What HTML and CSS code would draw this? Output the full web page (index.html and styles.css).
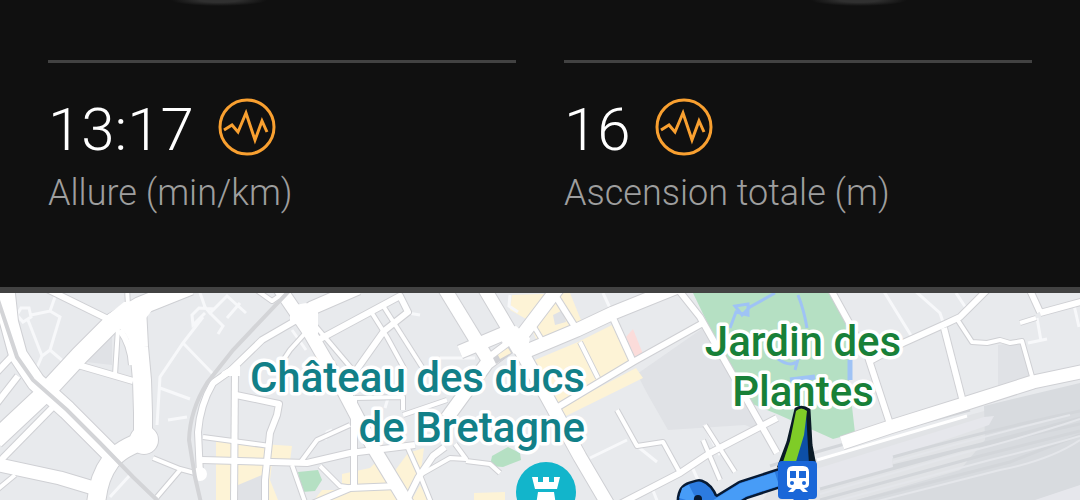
FILE: index.html
```html
<!DOCTYPE html>
<html lang="fr">
<head>
    <meta charset="UTF-8">
    <meta name="viewport" content="width=device-width, initial-scale=1.0">
    <link rel="stylesheet" href="styles.css">
    <title>Activité</title>
</head>
<body>
    <svg class="sprite" aria-hidden="true">
        <symbol id="pulse" viewBox="0 0 58 58">
            <circle cx="29" cy="29" r="27"/>
            <path d="M6 32L14 27L20 34L28 15L37 42L44 23L49 34"/>
        </symbol>
    </svg>
    <main>
        <section class="stats">
            <div class="stat">
                <div class="valeur">13:17 <svg class="pulse"><use href="#pulse"/></svg></div>
                <div class="nom">Allure (min/km)</div>
            </div>
            <div class="stat">
                <div class="valeur">16 <svg class="pulse"><use href="#pulse"/></svg></div>
                <div class="nom">Ascension totale (m)</div>
            </div>
        </section>
        <section class="carte">
            <svg class="plan" viewBox="0 293 1080 207" role="img" aria-label="Carte du parcours">
                <defs>
                    <!-- roads by width, drawn twice: border then white -->
                    <g id="xl">
                        <path d="M-5 440L43 395L80 355L113 322L140 306L190 286"/>
                        <path d="M137 308L139 347L142 380L143 413L143 440"/>
                        <path d="M146 440Q120 448 110 462Q98 478 96 505"/>
                        <path d="M5 285L9 322L18 355L36 382L67 410L100 443L115 458"/>
                    </g>
                    <g id="l">
                        <path d="M-5 464L60 478L100 490"/>
                        <path d="M278 286L310 333L343 390L373 447L410 508"/>
                        <path d="M295 320L312 308L358 288"/>
                        <path d="M443 286L487 358"/>
                        <path d="M483 286L515 340L547 397L580 457L610 508"/>
                        <path d="M447 418L487 363L520 338L558 288"/>
                        <path d="M460 352L512 330"/>
                        <path d="M522 353L577 330L613 313L680 286"/>
                        <path d="M842 443L890 427L967 403L1033 382L1090 370"/>
                    </g>
                    <g id="m">
                        <path d="M52 408L-2 463"/>
                        <path d="M18 376L-3 403"/>
                        <path d="M-3 372L15 353"/>
                        <path d="M45 288L110 320"/>
                        <path d="M78 365L133 381"/>
                        <path d="M120 330Q131 345 132 365"/>
                        <path d="M300 318L262 340L230 371L213 383Q200 405 198 432L200 475"/>
                        <path d="M235 370L234 505"/>
                        <path d="M236 395L279 404L277 415L270 433L265 480L265 505"/>
                        <path d="M202 460L307 463L350 453L415 445"/>
                        <path d="M320 339L400 296L408 312L384 331L355 372"/>
                        <path d="M553 292L577 330"/>
                        <path d="M613 318L633 362"/>
                        <path d="M558 407L633 362L703 323"/>
                        <path d="M677 288L700 317L730 370L777 453"/>
                        <path d="M618 505L680 473L710 453L777 418"/>
                        <path d="M830 288L868 357L891 427"/>
                        <path d="M870 361L903 343L943 325L960 317L987 290"/>
                        <path d="M944 328L963 402"/>
                        <path d="M1029 288L1040 312M1040 313L1084 301"/>
                        <path d="M407 500L418 478L433 456L445 447"/>
                        <path d="M310 505L350 488L398 486"/>
                        <path d="M354 396L354 485"/>
                    </g>
                    <g id="s">
                        <path d="M118 328L115 375"/>
                        <path d="M127 288L128 305"/>
                        <path d="M203 437L270 446"/>
                        <path d="M153 458L180 469L195 473M180 470L157 497"/>
                        <path d="M-2 489L15 475"/>
                        <path d="M313 323L363 382"/>
                        <path d="M370 310L387 337L405 370"/>
                        <path d="M382 304L422 367"/>
                        <path d="M255 289L272 301L288 290"/>
                        <path d="M300 463L317 440L350 425"/>
                        <path d="M292 465L306 505M320 466L340 486L354 488"/>
                        <path d="M355 398L403 397L403 410M403 415L447 400"/>
                        <path d="M308 330L290 350L280 365"/>
                        <path d="M407 446L420 475L432 505M420 475L450 458L466 459L455 444"/>
                        <path d="M466 461L490 464L500 473"/>
                        <path d="M530 320L545 345"/>
                        <path d="M580 342L598 378"/>
                        <path d="M957 319L972 342L987 343L1000 340L1010 343L1022 341L1033 380"/>
                        <path d="M1020 323L1036 318"/>
                        <path d="M705 425L735 472M703 440L720 480"/>
                        <path d="M617 410L637 446L663 442L680 473"/>
                    </g>
                </defs>
                <rect class="sol" y="293" width="1080" height="207"/>
                <!-- blocks and buildings -->
                <g class="bloc">
                    <path d="M637 374L703 328L720 350L762 432L745 425L668 430L648 395Z"/>
                    <path d="M998 345L1024 341L1033 380L998 388Z"/>
                    <path d="M86 362L112 335L112 365Z"/>
                </g>
                <g class="jaune">
                    <path d="M216 441L292 446L290 461L272 463L270 480L280 505H216Z"/>
                    <path d="M512 295L570 293L585 330L540 348L528 320L510 310Z"/>
                    <path d="M535 360L578 342L612 325L633 362L558 403Z"/>
                    <path d="M560 408L636 368L643 378L566 416Z"/>
                    <path d="M342 474L370 468L380 458L392 484L342 490Z"/>
                    <path d="M391 476L408 453L424 448L420 478L410 493Z"/>
                    <path d="M322 490L392 490L400 505H310ZM474 493L505 492L505 505H474ZM420 485L428 500L410 503Z"/>
                </g>
                <path class="bloc" d="M238 485L262 475V505H238ZM553 315L563 310L566 322L555 325Z"/>
                <path class="rose" d="M626 337L633 329L643 354L634 358Z"/>
                <g class="vert">
                    <path d="M693 293H833L850 330L849 380L855 433L833 439L777 414L750 403L730 370Z"/>
                    <path d="M298 472L318 470L322 480L315 491L302 492Z"/>
                    <path d="M490 466L492 456L508 447L520 453L521 460L503 467Z"/>
                </g>
                <g class="eau">
                    <path d="M775 293L750 307L742 315L735 306L748 304L748 315L736 312L730 328"/>
                    <path d="M798 295Q804 310 807 328M778 359Q790 367 796 362M795 370L798 359"/>
                    <path class="bassin" d="M850 360V380M790 380L815 377"/>
                </g>
                <!-- station tracks -->
                <path class="gare" d="M780 471L845 450L1080 384V505H760Z"/>
                <path class="gare-fonce" d="M984 406L1080 383V488L1020 505H840L960 470L985 440Z"/>
                <path class="quai" d="M790 477L984 417L994 416L989 425L892 458L893 470L800 495Z"/>
                <g class="voie">
                    <path d="M770 466Q830 447 970 410"/>
                    <path d="M893 457Q980 432 1080 411"/>
                    <path d="M893 466Q1000 440 1080 418"/>
                    <path d="M820 489L960 450L1080 424"/>
                    <path d="M820 500L980 456L1080 431"/>
                    <path d="M850 503L1010 462L1080 435"/>
                </g>
                <g class="voie claire">
                    <path d="M893 462Q980 437 1070 415"/>
                    <path d="M820 494L960 454Q1030 436 1080 419"/>
                    <path d="M840 500L990 460Q1040 448 1080 436"/>
                    <path d="M870 503L1000 470Q1050 460 1080 440"/>
                </g>
                <path class="quai" d="M1020 505L1080 485V505Z"/>
                <path class="fin" d="M817 460L967 416"/>
                <!-- footpaths -->
                <g class="fin pale">
                    <path d="M17 315L21 308L29 308L31 317L23 322ZM31 315L50 311L60 317L50 350L42 356L35 372M50 350L64 362M28 320L42 356M50 311L55 297"/>
                    <path d="M199 290L205 307L210 313L227 296L246 313M210 313L223 326L218 334M227 318L240 303M205 313L193 325L192 315L199 308L215 309M203 317L183 343L160 377L157 425M183 343L213 374M160 388L190 399M168 420L187 417"/>
                    <path d="M883 290L912 337M914 290L940 313L944 325M956 293L966 308M1037 318L1041 341M1028 343L1047 339M1074 305L1079 327"/>
                    <path d="M603 293L610 308M590 458L627 440M637 446L657 462M692 467L698 480M652 488L658 503M704 425L720 455M408 313L420 315M510 295L509 306L518 312"/>
                    <path d="M292 330L306 350M110 497L130 475M385 408L388 398H392M440 358H475M325 440L327 432L332 430"/>
                </g>
                <use href="#xl" class="bord xl-bord"/>
                <circle class="bord-rond" cx="144" cy="440" r="15"/>
                <use href="#l" class="bord l-bord"/>
                <use href="#m" class="bord m-bord"/>
                <use href="#s" class="bord s-bord"/>
                <use href="#s" class="rue s-rue"/>
                <use href="#m" class="rue m-rue"/>
                <use href="#l" class="rue l-rue"/>
                <use href="#xl" class="rue xl-rue"/>
                <circle class="rond" cx="144" cy="440" r="14"/>
                <circle class="rond" cx="200" cy="474" r="7"/>
                <path class="rond" d="M222 372L232 366H240V376H228L218 382Z"/>
                <path class="rond" d="M104 318L124 302L160 300L146 318L146 345L130 345Q128 332 118 328Z"/>
                <path class="rond" d="M290 306L306 303L318 308L318 334L300 325L290 322Z"/>
                <path class="rond" d="M498 330L516 326L530 338L526 358L505 350Z"/>
                <path class="bord-rond" d="M493 358L509 346L513 353L496 364Z"/>
                <path class="jaune" d="M498 355L508 348L511 353L500 359Z"/>
                <g class="rail">
                    <path d="M-2 300L7 327L17 357L33 380L67 410L100 443L133 477L160 503"/>
                    <path d="M289 291L233 350L207 383Q190 410 189 440L195 477L201 503"/>
                </g>
                <!-- labels -->
                <g class="lieu chateau">
                    <text x="585" y="392">Château des ducs</text>
                    <text x="585" y="442">de Bretagne</text>
                </g>
                <g class="lieu jardin">
                    <text x="803" y="356">Jardin des</text>
                    <text x="803" y="406">Plantes</text>
                </g>
                <!-- castle marker -->
                <circle class="repere" cx="546" cy="492" r="30"/>
                <path class="blanc" d="M532 477H538V482H543V477H549V482H554V477H560L557 489H535ZM538 492H554L556 505H536Z"/>
                <!-- route -->
                <path class="trace-bord" d="M687 508Q685 493 692 491L699 489Q705 491 709 501L717 506L743 490L783 477"/>
                <path class="trace" d="M687 508Q685 493 692 491L699 489Q705 491 709 501L717 506L743 490L783 477"/>
                <path class="trace-claire" d="M717 506L743 490L777 479M686 500L688 493L692 491"/>
                <circle class="noir" cx="698" cy="499" r="4"/>
                <path class="contour" d="M796 409Q802 405 809 410L811 445L815 466H779L788 442Z"/>
                <path class="bleu-fonce" d="M806 411L809 465H790Z"/>
                <path class="vert-vif" d="M796 411Q801 406 807 411L804 435L795 465H782L790 441Z"/>
                <!-- station marker -->
                <circle class="gare-pin" cx="801" cy="493" r="10"/>
                <rect class="gare-pin" x="778" y="461" width="39" height="38" rx="4"/>
                <path class="blanc" d="M787 472Q787 466 793 466H803Q809 466 809 472V484Q809 488 804 488L808 492H803L800 489H796L793 492H788L792 488Q787 488 787 484Z"/>
                <path class="gare-pin" d="M790 471H796V478H790ZM799 471H806V478H799Z"/>
                <circle class="gare-pin" cx="792" cy="483" r="2"/>
                <circle class="gare-pin" cx="804" cy="483" r="2"/>
            </svg>
        </section>
    </main>
</body>
</html>
```
FILE: styles.css
```css
body{
    margin: 0;
    background: #101010;
    font-family: Roboto, "Liberation Sans", sans-serif;
    font-weight: 300;
}
.sprite{
    display: none;
}
.stats{
    display: grid;
    grid-template-columns: 1fr 1fr;
    gap: 48px;
    padding: 60px 48px 69px;
    /* bottom edge of the round buttons above */
    background: radial-gradient(ellipse 48px 6px at 219px 0, #303030 40%, transparent),
                radial-gradient(ellipse 48px 6px at 859px 0, #303030 40%, transparent);
}
.stat{
    border-top: 3px solid #424242;
    padding-top: 35px;
}
.valeur{
    display: flex;
    align-items: flex-start;
    gap: 24px;
    color: #fff;
    font-size: 60px;
    line-height: 64px;
}
.pulse{
    width: 58px;
    height: 58px;
    fill: none;
    stroke: #f9a030;
    stroke-width: 3;
}
.nom{
    margin-top: 6px;
    color: #9e9e9e;
    font-size: 36px;
    line-height: 50px;
}
.carte{
    border-top: 6px solid #424242;
}
.plan{
    display: block;
    width: 100%;
    fill: none;
}
.sol{
    fill: #e8eaed;
}
.bloc{
    fill: #e0e2e6;
}
.jaune{
    fill: #fdf3d6;
}
.rose{
    fill: #fbdcda;
}
.vert{
    fill: #b5e0c3;
}
.eau{
    stroke: #9fc3f5;
    stroke-width: 3;
}
.bassin{
    stroke-width: 5;
}
.gare{
    fill: #e1e3e6;
}
.gare-fonce{
    fill: #d8dbdf;
}
.quai{
    fill: #e6e7ec;
}
.voie{
    stroke: #d3d6da;
    stroke-width: 3;
}
.claire{
    stroke: #e4e6ea;
    stroke-width: 2;
}
.fin{
    stroke: #fff;
    stroke-width: 3;
}
.pale{
    stroke: #f7f8fa;
}
.bord{
    stroke: #cfd0d4;
    stroke-linejoin: round;
}
.rue{
    stroke: #fff;
    stroke-linejoin: round;
}
.xl-bord{
    stroke-width: 20px;
}
.xl-rue{
    stroke-width: 18px;
}
.l-bord{
    stroke-width: 15px;
}
.l-rue{
    stroke-width: 13px;
}
.m-bord{
    stroke-width: 8px;
}
.m-rue{
    stroke-width: 6px;
}
.s-bord{
    stroke-width: 6px;
}
.s-rue{
    stroke-width: 4px;
}
.rond, .blanc{
    fill: #fff;
}
.bord-rond{
    fill: #cfd0d4;
}
.rail{
    stroke: #d3d4d7;
    stroke-width: 4;
}
.lieu{
    font-size: 42px;
    font-weight: 500;
    stroke: #fff;
    stroke-width: 7;
    stroke-linejoin: round;
    paint-order: stroke;
}
.chateau{
    fill: #128088;
    text-anchor: end;
}
.jardin{
    fill: #188038;
    text-anchor: middle;
}
.repere{
    fill: #12b5cb;
}
.trace-bord{
    stroke: #071a33;
    stroke-width: 20;
    stroke-linejoin: round;
}
.trace{
    stroke: #2c7be0;
    stroke-width: 15;
    stroke-linejoin: round;
}
.trace-claire{
    stroke: #479cf7;
    stroke-width: 14;
}
.noir{
    fill: #071a33;
}
.contour{
    fill: #0a1a26;
    stroke: #0a1a26;
    stroke-width: 3;
}
.bleu-fonce{
    fill: #0d4fa6;
}
.vert-vif{
    fill: #7fcc27;
}
.gare-pin{
    fill: #1a67d8;
}
```
